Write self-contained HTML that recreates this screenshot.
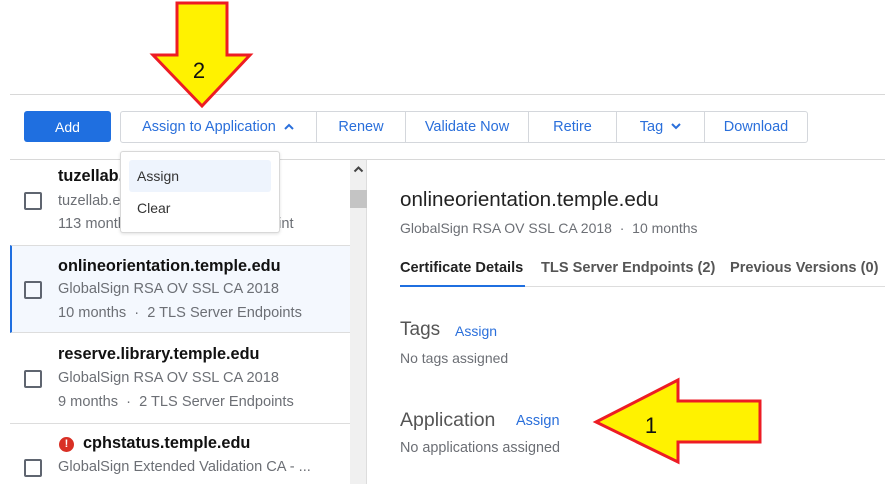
<!DOCTYPE html>
<html><head><style>
*{box-sizing:border-box;margin:0;padding:0}
body{width:885px;height:501px;background:#fff;font-family:"Liberation Sans",sans-serif;position:relative;overflow:hidden;color:#222}
.a{position:absolute;white-space:nowrap}
.btn{position:absolute;top:111px;height:31px;font-size:14px;color:#2a6fdb;display:flex;align-items:center;justify-content:center;border-right:1px solid #d4d7dc}
.cb{position:absolute;left:24px;width:18px;height:18px;border:2px solid #5f6570;border-radius:2px}
.t{font-size:16.3px;font-weight:bold;color:#111}
.s{font-size:14.6px;color:#6c6f75}
</style></head><body>
<div class="a" style="left:10px;top:94px;width:875px;height:1px;background:#d8d8d8"></div>
<div class="a" style="left:24px;top:111px;width:87px;height:31px;background:#1f6fe0;border-radius:3px;color:#fff;font-size:14px;display:flex;align-items:center;justify-content:center">Add</div>
<div class="a" style="left:120px;top:111px;width:688px;height:32px;border:1px solid #d4d7dc;border-radius:3px"></div>
<div class="btn" style="left:120px;width:197px;font-size:14.5px">Assign to Application&nbsp;&nbsp;<svg width="10" height="7"><path d="M1 6L5 2L9 6" fill="none" stroke="#2a6fdb" stroke-width="2"/></svg></div>
<div class="btn" style="left:317px;width:89px;font-size:14.5px">Renew</div>
<div class="btn" style="left:406px;width:123px;font-size:14.5px">Validate Now</div>
<div class="btn" style="left:529px;width:88px;font-size:14.5px">Retire</div>
<div class="btn" style="left:617px;width:88px;font-size:14.5px">Tag&nbsp;&nbsp;<svg width="10" height="7"><path d="M1 1L5 5L9 1" fill="none" stroke="#2a6fdb" stroke-width="2"/></svg></div>
<div class="btn" style="left:705px;width:102px;border-right:none;font-size:14.5px">Download</div>
<div class="a" style="left:10px;top:159px;width:875px;height:1px;background:#d8d8d8"></div>
<div class="a" style="left:350px;top:160px;width:17px;height:324px;background:#f0f0f0;border-right:1px solid #ddd"></div>
<div class="a" style="left:350px;top:190px;width:17px;height:18px;background:#c4c4c4"></div>
<svg class="a" style="left:353px;top:165px" width="11" height="8"><path d="M1.5 6.5L5.5 2.5L9.5 6.5" fill="none" stroke="#444" stroke-width="2"/></svg>
<!-- rows -->
<div class="a t" style="left:58px;top:167px">tuzellab.e</div>
<div class="cb" style="top:192px"></div>
<div class="a s" style="left:58px;top:193px">tuzellab.e</div>
<div class="a s" style="left:58px;top:216px">113 months · 1 TLS Server Endpoint</div>
<div class="a" style="left:10px;top:245px;width:340px;height:88px;background:#f4f8fe;border-left:2px solid #1f6fe0;border-top:1px solid #ddd;border-bottom:1px solid #ddd"></div>
<div class="a t" style="left:58px;top:257px">onlineorientation.temple.edu</div>
<div class="cb" style="top:281px"></div>
<div class="a s" style="left:58px;top:281px">GlobalSign RSA OV SSL CA 2018</div>
<div class="a s" style="left:58px;top:305px">10 months &nbsp;· &nbsp;2 TLS Server Endpoints</div>
<div class="a t" style="left:58px;top:345px">reserve.library.temple.edu</div>
<div class="cb" style="top:370px"></div>
<div class="a s" style="left:58px;top:370px">GlobalSign RSA OV SSL CA 2018</div>
<div class="a s" style="left:58px;top:394px">9 months &nbsp;· &nbsp;2 TLS Server Endpoints</div>
<div class="a" style="left:10px;top:423px;width:340px;height:1px;background:#ddd"></div>
<div class="a" style="left:59px;top:437px;width:15px;height:15px;border-radius:50%;background:#d93025;color:#fff;font-size:11px;font-weight:bold;text-align:center;line-height:15px">!</div>
<div class="a t" style="left:83px;top:434px">cphstatus.temple.edu</div>
<div class="cb" style="top:459px"></div>
<div class="a s" style="left:58px;top:459px">GlobalSign Extended Validation CA - ...</div>
<!-- dropdown -->
<div class="a" style="left:120px;top:151px;width:160px;height:82px;background:#fff;border:1px solid #d8d8d8;border-radius:3px;box-shadow:0 1px 3px rgba(0,0,0,.12)"></div>
<div class="a" style="left:129px;top:160px;width:142px;height:32px;background:#eef4fd;border-radius:3px"></div>
<div class="a" style="left:137px;top:168px;font-size:14px;color:#333">Assign</div>
<div class="a" style="left:137px;top:200px;font-size:14px;color:#333">Clear</div>
<!-- right -->
<div class="a" style="left:400px;top:188px;font-size:20.6px;color:#222">onlineorientation.temple.edu</div>
<div class="a s" style="left:400px;top:220px;font-size:14px">GlobalSign RSA OV SSL CA 2018 &nbsp;· &nbsp;10 months</div>
<div class="a" style="left:400px;top:260px;font-size:14.6px;font-weight:bold;color:#222">Certificate Details</div>
<div class="a" style="left:541px;top:260px;font-size:14.6px;font-weight:bold;color:#555">TLS Server Endpoints (2)</div>
<div class="a" style="left:730px;top:260px;font-size:14.6px;font-weight:bold;color:#555">Previous Versions (0)</div>
<div class="a" style="left:400px;top:286px;width:485px;height:1px;background:#ddd"></div>
<div class="a" style="left:400px;top:285px;width:125px;height:2px;background:#1f6fe0"></div>
<div class="a" style="left:400px;top:319px;font-size:19px;color:#555">Tags</div>
<div class="a" style="left:455px;top:323px;font-size:14px;color:#2a6fdb">Assign</div>
<div class="a s" style="left:400px;top:350px;font-size:14px">No tags assigned</div>
<div class="a" style="left:400px;top:409px;font-size:19.5px;color:#555">Application</div>
<div class="a" style="left:516px;top:413px;font-size:14.5px;color:#2a6fdb">Assign</div>
<div class="a s" style="left:400px;top:440px;font-size:14.4px">No applications assigned</div>
<!-- arrows -->
<svg class="a" style="left:0;top:0" width="885" height="501">
<polygon points="177,3 227,3 227,55 250,55 202,106 153,55 177,55" fill="#fff200" stroke="#ed1c24" stroke-width="3"/>
<text x="199" y="78" font-size="22" font-family="Liberation Sans" text-anchor="middle" fill="#111">2</text>
<polygon points="596,422 678,380 678,401 760,401 760,442 678,442 678,462" fill="#fff200" stroke="#ed1c24" stroke-width="3"/>
<text x="651" y="433" font-size="22" font-family="Liberation Sans" text-anchor="middle" fill="#111">1</text>
</svg>
</body></html>
